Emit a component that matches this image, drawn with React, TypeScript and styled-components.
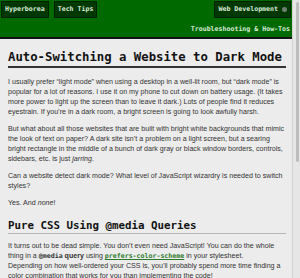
import styled, { createGlobalStyle } from "styled-components";

const GlobalStyle = createGlobalStyle`
  html, body {
    margin: 0;
    padding: 0;
    height: 100%;
    overflow: hidden;
  }
  #root {
    height: 100%;
  }
`;

export default function App() {
  return (
    <>
      <GlobalStyle />
      <Page>
        <Content>
          <Header>
            <TabRow>
              <Tab>Hyperborea</Tab>
              <Tab>Tech Tips</Tab>
              <Spacer />
              <Tab>
                Web Development <Dot />
              </Tab>
            </TabRow>
            <SubRow>
              <SubLink>Troubleshooting &amp; How-Tos</SubLink>
            </SubRow>
          </Header>
          <Article>
            <Title>Auto-Switching a Website to Dark Mode</Title>
            <Para>
              I usually prefer “light mode” when using a desktop in a well-lit
              room, but “dark mode” is popular for a lot of reasons. I use it on
              my phone to cut down on battery usage. (It takes more power to
              light up the screen than to leave it dark.) Lots of people find it
              reduces eyestrain. If you’re in a dark room, a bright screen is
              going to look awfully harsh.
            </Para>
            <Para>
              But what about all those websites that are built with bright white
              backgrounds that mimic the look of text on paper? A dark site
              isn’t a problem on a light screen, but a searing bright rectangle
              in the middle of a bunch of dark gray or black window borders,
              controls, sidebars, etc. is just <em>jarring</em>.
            </Para>
            <Para>
              Can a website detect dark mode? What level of JavaScript wizardry
              is needed to switch styles?
            </Para>
            <Para>
              Yes. And <em>none</em>!
            </Para>
            <SubTitle>Pure CSS Using @media Queries</SubTitle>
            <Para>
              It turns out to be dead simple. You don’t even need JavaScript! You
              can do the whole thing in a{" "}
              <strong>
                <Code>@media</Code> query
              </strong>{" "}
              using <CodeLink>prefers-color-scheme</CodeLink> in your
              stylesheet.
              <br />
              Depending on how well-ordered your CSS is, you’ll probably spend
              more time finding a color combination that works for you than
              implementing the code!
            </Para>
            <Para>
              For example, on this site, I put this block after all the body and
              link colors are defined, but before the more specific colors for
              the header. Using the <em>cascading</em> part of Cascading Style
              Sheets means the header keeps its own look.
            </Para>
          </Article>
        </Content>
        <ScrollTrack>
          <ScrollThumb />
        </ScrollTrack>
      </Page>
    </>
  );
}

const Page = styled.div`
  height: 100%;
  display: flex;
  background: #ececec;
  overflow: hidden;
`;

const Content = styled.div`
  flex: 1;
  min-width: 0;
  overflow: hidden;
`;

const ScrollTrack = styled.div`
  width: 8px;
  flex-shrink: 0;
  background: #e6e6e6;
  border-left: 1px solid #d4d4d4;
  box-sizing: border-box;
  padding: 2px 1px 0 3px;
`;

const ScrollThumb = styled.div`
  height: 160px;
  background: #bdbdbd;
  border-radius: 2px;
`;

const Header = styled.header`
  background: #006a00;
  border-bottom: 2px solid #111;
  padding: 1px 1px 2px 1px;
  display: flex;
  flex-direction: column;
  gap: 5px;
`;

const TabRow = styled.nav`
  display: flex;
  gap: 5px;
`;

const Spacer = styled.div`
  flex: 1;
`;

const Tab = styled.a`
  font-family: "DejaVu Sans Mono", monospace;
  font-size: 6.6px;
  font-weight: bold;
  color: #d8ecd8;
  background: #003800;
  border: 1px solid #002400;
  padding: 3px 3px 4px;
  line-height: 8px;
  display: flex;
  align-items: center;
  gap: 4px;
`;

const Dot = styled.span`
  width: 5px;
  height: 5px;
  border-radius: 50%;
  background: #6f7f6f;
`;

const SubRow = styled.div`
  display: flex;
  justify-content: flex-end;
`;

const SubLink = styled.a`
  font-family: "DejaVu Sans Mono", monospace;
  font-size: 6.6px;
  font-weight: bold;
  color: #d8ecd8;
  padding: 2px 1px 2px 3px;
  line-height: 8px;
`;

const Article = styled.main`
  padding: 11px 6px 8px 8px;
  font-family: "Liberation Sans", Arial, sans-serif;
  color: #333;
`;

const Title = styled.h1`
  font-family: "DejaVu Sans Mono", monospace;
  font-size: 12.3px;
  font-weight: bold;
  color: #111;
  margin: 0 0 9px;
  padding-bottom: 1px;
  border-bottom: 2px solid #333;
  line-height: 15px;
`;

const SubTitle = styled.h2`
  font-family: "DejaVu Sans Mono", monospace;
  font-size: 10.8px;
  font-weight: bold;
  color: #111;
  margin: 11px 0 7px;
  padding-bottom: 1px;
  border-bottom: 1px solid #b8b8b8;
  line-height: 13px;
`;

const Para = styled.p`
  font-size: 7.1px;
  line-height: 10px;
  margin: 0 0 7px;
`;

const Code = styled.code`
  font-family: "DejaVu Sans Mono", monospace;
  font-size: 6.6px;
  line-height: 1;
`;

const CodeLink = styled.a`
  font-family: "DejaVu Sans Mono", monospace;
  font-size: 6.6px;
  line-height: 1;
  font-weight: bold;
  color: #2d7a2d;
  text-decoration: underline;
`;
